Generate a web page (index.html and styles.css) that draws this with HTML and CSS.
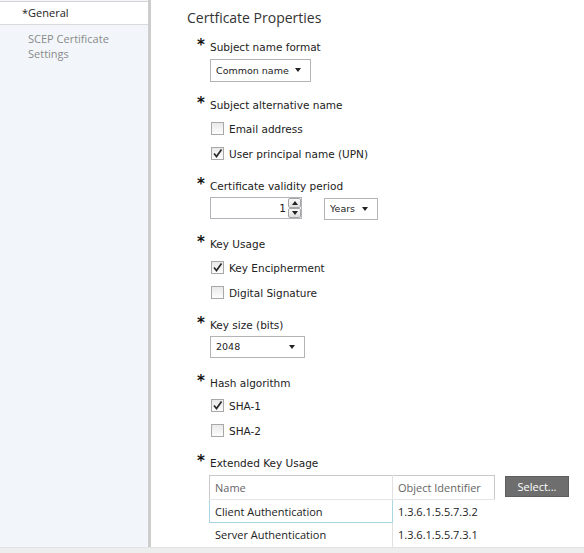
FILE: index.html
```html
<!DOCTYPE html>
<html>
<head>
    <title>Certificate Properties</title>
    <link rel="stylesheet" href="styles.css">
</head>
<body>
    <div class="page">
        <div class="layout">
            <nav class="sidebar">
                <div class="nav-item active">*General</div>
                <div class="nav-item">SCEP Certificate<br>Settings</div>
            </nav>
            <main class="content">
                <h1>Certficate Properties</h1>

                <div class="field">
                    <div class="field-label"><span class="req">*</span>Subject name format</div>
                    <div class="dropdown w-name">Common name<span class="caret"></span></div>
                </div>

                <div class="field">
                    <div class="field-label"><span class="req">*</span>Subject alternative name</div>
                    <div class="checks">
                        <div class="check-row"><span class="box"></span>Email address</div>
                        <div class="check-row"><span class="box"><svg viewBox="0 0 11 11"><path d="M2 5.5 L4.5 8.5 L9.5 1.5"/></svg></span>User principal name (UPN)</div>
                    </div>
                </div>

                <div class="field">
                    <div class="field-label"><span class="req">*</span>Certificate validity period</div>
                    <div class="control-row">
                        <div class="spin">
                            <span class="spin-value">1</span>
                            <span class="spin-buttons">
                                <span class="spin-btn"><span class="tri-up"></span></span>
                                <span class="spin-btn"><span class="tri-down"></span></span>
                            </span>
                        </div>
                        <div class="dropdown w-years">Years<span class="caret"></span></div>
                    </div>
                </div>

                <div class="field">
                    <div class="field-label"><span class="req">*</span>Key Usage</div>
                    <div class="checks">
                        <div class="check-row"><span class="box"><svg viewBox="0 0 11 11"><path d="M2 5.5 L4.5 8.5 L9.5 1.5"/></svg></span>Key Encipherment</div>
                        <div class="check-row"><span class="box"></span>Digital Signature</div>
                    </div>
                </div>

                <div class="field">
                    <div class="field-label"><span class="req">*</span>Key size (bits)</div>
                    <div class="dropdown w-size">2048<span class="caret"></span></div>
                </div>

                <div class="field">
                    <div class="field-label"><span class="req">*</span>Hash algorithm</div>
                    <div class="checks tight">
                        <div class="check-row"><span class="box"><svg viewBox="0 0 11 11"><path d="M2 5.5 L4.5 8.5 L9.5 1.5"/></svg></span>SHA-1</div>
                        <div class="check-row"><span class="box"></span>SHA-2</div>
                    </div>
                </div>

                <div class="field">
                    <div class="field-label"><span class="req">*</span>Extended Key Usage</div>
                    <div class="eku">
                        <table class="eku-table">
                            <thead>
                                <tr><th class="col-name">Name</th><th>Object Identifier</th></tr>
                            </thead>
                            <tbody>
                                <tr class="selected"><td class="col-name">Client Authentication</td><td>1.3.6.1.5.5.7.3.2</td></tr>
                                <tr><td class="col-name">Server Authentication</td><td>1.3.6.1.5.5.7.3.1</td></tr>
                                <tr><td class="col-name">&nbsp;</td><td>&nbsp;</td></tr>
                            </tbody>
                        </table>
                        <button class="select-btn">Select...</button>
                    </div>
                </div>
            </main>
        </div>
        <div class="status-strip"></div>
    </div>
</body>
</html>
```

FILE: styles.css
```css
body { margin: 0; background: #fff; }
.page { width: 584px; height: 553px; display: flex; flex-direction: column; overflow: hidden; }
.layout { display: flex; height: 548px; overflow: hidden; }
.status-strip { height: 5px; background: #ededed; border-top: 1px solid #e2e2e2; }

/* left nav */
.sidebar { width: 148px; flex-shrink: 0; background: #f2f6fb; border-right: 3px solid #cdcdcd; padding-top: 1px; font-family: "Open Sans", sans-serif; font-size: 11px; }
.nav-item { padding: 0 0 0 28px; line-height: 15px; color: #8a8a8a; margin-top: 6px; }
.nav-item.active { margin-top: 0; padding-left: 22px; height: 22px; line-height: 22px; background: #fff; color: #222; border-top: 1px solid #d4d4d4; border-bottom: 1px solid #dadada; }

/* main form */
.content { flex: 1; display: flex; flex-direction: column; padding: 8px 0 0 36px; font-family: "DejaVu Sans", Verdana, sans-serif; font-size: 10.5px; color: #222; }
h1 { margin: 0 0 12px; font-family: "Open Sans", sans-serif; font-weight: normal; font-size: 14px; line-height: 19px; color: #333; }
.field { display: flex; flex-direction: column; align-items: flex-start; margin-left: 10px; margin-bottom: 12px; }
.field-label { line-height: 16px; display: flex; }
.req { width: 13px; font-weight: bold; font-size: 15px; line-height: 12px; color: #111; }

.dropdown { position: relative; margin: 3px 0 5px 13px; height: 20px; line-height: 20px; border: 1px solid #b4b4b4; padding-left: 5px; background: #fff; font-size: 9.5px; }
.w-name { width: 94px; height: 21px; line-height: 21px; margin: 4px 0 3px 13px; }
.w-years { width: 47px; margin: 1px 0 0; }
.w-size { width: 88px; }
.caret { position: absolute; right: 9px; top: 8px; border-left: 3px solid transparent; border-right: 3px solid transparent; border-top: 4px solid #222; }

.control-row { display: flex; align-items: flex-start; gap: 22px; margin: 3px 0 4px 13px; }
.spin { width: 90px; height: 20px; border: 1px solid #b0b3b8; display: flex; justify-content: flex-end; align-items: center; background: #fff; }
.spin-value { padding-right: 2px; }
.spin-buttons { display: flex; flex-direction: column; width: 13px; }
.spin-btn { height: 8px; border: 1px solid #a5a5a5; border-radius: 2px; background: linear-gradient(#fafafa, #dedede); display: flex; align-items: center; justify-content: center; }
.tri-up { border-left: 3px solid transparent; border-right: 3px solid transparent; border-bottom: 4px solid #222; }
.tri-down { border-left: 3px solid transparent; border-right: 3px solid transparent; border-top: 4px solid #222; }

.checks { margin-top: 3px; }
.checks.tight { margin-top: 2px; }
.check-row { display: flex; align-items: center; height: 25px; padding-left: 14px; }
.box { width: 11px; height: 11px; border: 1px solid #a8a8a8; background: linear-gradient(#e9e9e9, #fdfdfd); margin-right: 5px; display: flex; }
.box svg { width: 11px; height: 11px; }
.box path { fill: none; stroke: #2a2a2a; stroke-width: 1.7; }

/* extended key usage */
.eku { display: flex; align-items: flex-start; margin: 4px 0 0 12px; }
.eku-table { width: 286px; border-collapse: collapse; border: 1px solid #c9c9c9; font-family: "Open Sans", sans-serif; font-size: 11px; }
.eku-table th { height: 23px; text-align: left; font-weight: normal; color: #666; padding: 0 5px; border-bottom: 1px solid #e6e6e6; }
.eku-table td { height: 22px; padding: 0 5px; color: #222; border: 1px solid transparent; }
.eku-table .col-name { width: 172px; border-right: 1px solid #e0e0e0; }
.eku-table tr.selected .col-name { border: 1px solid #a9d6e2; }
.select-btn { margin-left: 10px; margin-top: 1px; width: 64px; height: 21px; background: #6e6e6e; border: 1px solid #5e5e5e; color: #fff; font-family: "Open Sans", sans-serif; font-size: 11px; padding: 0; }
```
